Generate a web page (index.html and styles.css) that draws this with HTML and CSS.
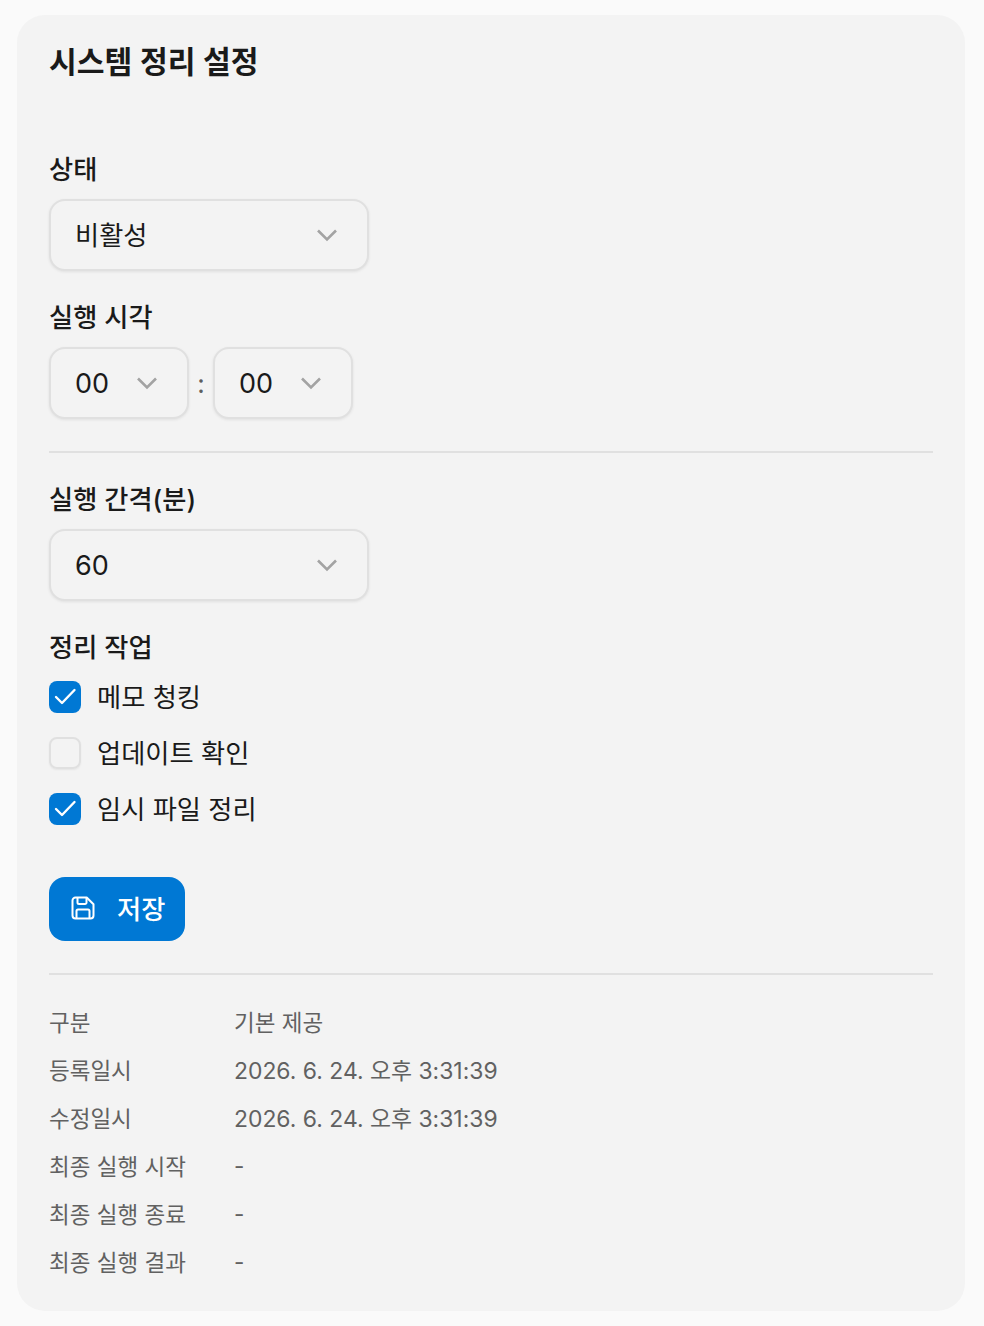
FILE: index.html
```html
<!doctype html>
<html lang="ko">

<head>
    <meta charset="utf-8">
    <meta name="viewport" content="width=device-width, initial-scale=1">
    <title>시스템 정리 설정</title>

    <link rel="stylesheet" href="styles.css">
</head>

<body>
    <main class="card">
        <h1 class="title">시스템 정리 설정</h1>

        <div class="field first">
            <div class="label">상태</div>
            <div class="select wide">
                <span class="select-text">비활성</span>
                <svg class="chevron" viewBox="0 0 20 20"><path d="M1 5.500l9 9 9-9"/></svg>
            </div>
        </div>

        <div class="field">
            <div class="label">실행 시각</div>
            <div class="time-row">
                <div class="select hour">
                    <span class="num">00</span>
                    <svg class="chevron" viewBox="0 0 20 20"><path d="M1 5.500l9 9 9-9"/></svg>
                </div>
                <span class="colon">:</span>
                <div class="select minute">
                    <span class="num">00</span>
                    <svg class="chevron" viewBox="0 0 20 20"><path d="M1 5.500l9 9 9-9"/></svg>
                </div>
            </div>
        </div>

        <hr class="divider">

        <div class="field">
            <div class="label">실행 간격(분)</div>
            <div class="select wide">
                <span class="num">60</span>
                <svg class="chevron" viewBox="0 0 20 20"><path d="M1 5.500l9 9 9-9"/></svg>
            </div>
        </div>

        <div class="field">
            <div class="label">정리 작업</div>
            <div class="checks">
                <div class="check-row">
                    <span class="box on"><svg viewBox="0 0 32 32"><path d="M7 16l6 6L25.500 9"/></svg></span>
                    <span class="check-text">메모 청킹</span>
                </div>
                <div class="check-row">
                    <span class="box"></span>
                    <span class="check-text">업데이트 확인</span>
                </div>
                <div class="check-row">
                    <span class="box on"><svg viewBox="0 0 32 32"><path d="M7 16l6 6L25.500 9"/></svg></span>
                    <span class="check-text">임시 파일 정리</span>
                </div>
            </div>
        </div>

        <button class="save">
            <svg viewBox="0 0 24 24"><path d="M4.500 1.500h11.200l6.800 6.800v11.200a3 3 0 0 1-3 3h-15a3 3 0 0 1-3-3v-15a3 3 0 0 1 3-3Z"/><path d="M6.500 1.500v5a1.500 1.500 0 0 0 1.500 1.500h6a1.500 1.500 0 0 0 1.500-1.500v-4.500"/><path d="M5.500 22.500v-7.500a1.500 1.500 0 0 1 1.500-1.500h10a1.500 1.500 0 0 1 1.500 1.500v7.500"/></svg>
            <span>저장</span>
        </button>

        <hr class="divider lower">

        <dl class="info">
            <div class="info-row"><dt>구분</dt><dd>기본 제공</dd></div>
            <div class="info-row"><dt>등록일시</dt><dd class="date">2026. 6. 24. 오후 3:31:39</dd></div>
            <div class="info-row"><dt>수정일시</dt><dd class="date">2026. 6. 24. 오후 3:31:39</dd></div>
            <div class="info-row"><dt>최종 실행 시작</dt><dd>-</dd></div>
            <div class="info-row"><dt>최종 실행 종료</dt><dd>-</dd></div>
            <div class="info-row"><dt>최종 실행 결과</dt><dd>-</dd></div>
        </dl>
    </main>
</body>

</html>
```

FILE: styles.css
```css
* {
    box-sizing: border-box;
}

body {
    margin: 0;
    padding: 15px 19px 15px 17px;
    background-color: #fafafa;
    color: #1a1a1a;
    font-family: Inter, "Noto Sans CJK KR", sans-serif;
}

.card {
    height: 1296px;
    padding: 25px 32px 0;
    background-color: #f3f3f3;
    border-radius: 28px;
}

.title {
    margin: 0;
    height: 44px;
    font-size: 30.200px;
    line-height: 44px;
    font-weight: 600;
}

.field {
    margin-top: 30px;
}

.field.first {
    margin-top: 69px;
}

.label {
    height: 34px;
    margin-bottom: 12px;
    font-size: 26.250px;
    line-height: 34px;
    font-weight: 500;
}

.select {
    display: flex;
    align-items: center;
    justify-content: space-between;
    height: 72px;
    padding: 0 30px 0 24px;
    border: 2px solid #e0e0e0;
    border-radius: 16px;
    background-color: #f3f3f3;
    box-shadow: 0 1px 3px rgba(0, 0, 0, 0.08);
    font-size: 26.250px;
}

.select-text {
    padding-bottom: 2px;
}

.num {
    font-size: 27px;
}

.wide {
    width: 320px;
}

.hour {
    width: 140px;
}

.minute {
    width: 140px;
}

.chevron {
    width: 20px;
    height: 20px;
    fill: none;
    stroke: #a3a3a3;
    stroke-width: 2.600;
}

.time-row {
    display: flex;
    align-items: center;
}

.colon {
    width: 24px;
    text-align: center;
    font-size: 26px;
    color: #5f5f5f;
}

.divider {
    margin: 32px 0 0;
    height: 2px;
    border: 0;
    background-color: #e0e0e0;
}

.checks {
    display: flex;
    flex-direction: column;
    gap: 24px;
    margin-top: 16px;
}

.check-row {
    display: flex;
    align-items: center;
    gap: 16px;
    height: 32px;
    font-size: 26.250px;
}

.check-text {
    padding-bottom: 2px;
}

.box {
    width: 32px;
    height: 32px;
    border: 2px solid #e0e0e0;
    border-radius: 8px;
    box-shadow: 0 1px 2px rgba(0, 0, 0, 0.06);
}

.box.on {
    border: 0;
    background-color: #0078d4;
    box-shadow: none;
}

.box svg {
    display: block;
    width: 32px;
    height: 32px;
    fill: none;
    stroke: #fff;
    stroke-width: 2.400;
    stroke-linecap: round;
    stroke-linejoin: round;
}

.save {
    display: flex;
    align-items: center;
    gap: 22px;
    width: 136px;
    height: 64px;
    margin-top: 52px;
    padding: 0 22px 2px;
    border: 0;
    border-radius: 16px;
    background-color: #0078d4;
    color: #fff;
    font-family: inherit;
    font-size: 26.250px;
    font-weight: 500;
    white-space: nowrap;
}

.save svg {
    width: 24px;
    height: 24px;
    flex: none;
    fill: none;
    stroke: #fff;
    stroke-width: 2;
    stroke-linejoin: round;
}

.divider.lower {
    margin-top: 32px;
}

.info {
    margin: 22px 0 0;
}

.info-row {
    display: flex;
    align-items: center;
    height: 48px;
    font-size: 22.500px;
    color: #616161;
}

.info-row dt {
    width: 185px;
}

.info-row dd {
    margin: 0;
}

.info-row .date {
    font-size: 22.900px;
}
```
